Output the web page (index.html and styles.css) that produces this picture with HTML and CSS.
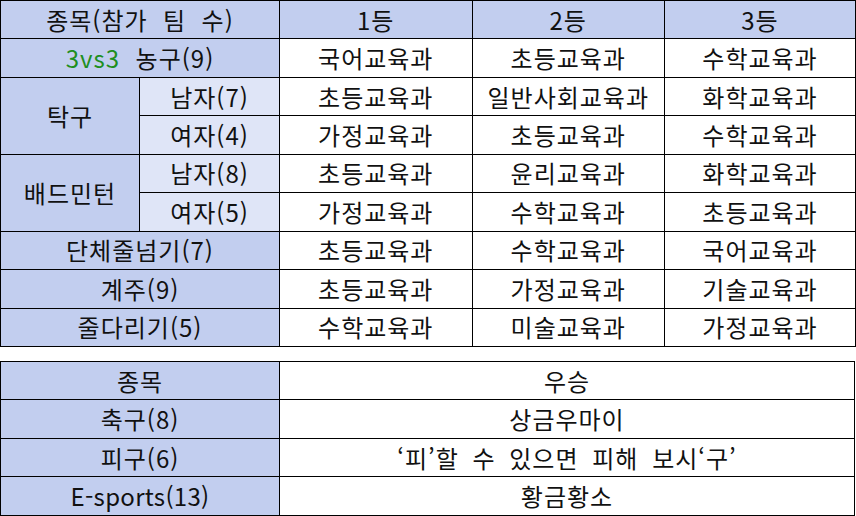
FILE: index.html
```html
<!DOCTYPE html>
<html lang="ko">
<head>
<meta charset="utf-8">
<link rel="stylesheet" href="styles.css">
</head>
<body>
<table class="tbl t1">
  <colgroup>
    <col class="c-a"><col class="c-b"><col class="c-r"><col class="c-r"><col class="c-r3">
  </colgroup>
  <tr><td class="hd" colspan="2">종목(참가&nbsp; 팀&nbsp; 수)</td><td class="hd">1등</td><td class="hd">2등</td><td class="hd">3등</td></tr>
  <tr><td class="hd" colspan="2"><span class="green">3vs3</span>&nbsp; 농구(9)</td><td>국어교육과</td><td>초등교육과</td><td>수학교육과</td></tr>
  <tr><td class="hd" rowspan="2">탁구</td><td class="sub">남자(7)</td><td>초등교육과</td><td>일반사회교육과</td><td>화학교육과</td></tr>
  <tr><td class="sub">여자(4)</td><td>가정교육과</td><td>초등교육과</td><td>수학교육과</td></tr>
  <tr><td class="hd" rowspan="2">배드민턴</td><td class="sub">남자(8)</td><td>초등교육과</td><td>윤리교육과</td><td>화학교육과</td></tr>
  <tr><td class="sub">여자(5)</td><td>가정교육과</td><td>수학교육과</td><td>초등교육과</td></tr>
  <tr><td class="hd" colspan="2">단체줄넘기(7)</td><td>초등교육과</td><td>수학교육과</td><td>국어교육과</td></tr>
  <tr><td class="hd" colspan="2">계주(9)</td><td>초등교육과</td><td>가정교육과</td><td>기술교육과</td></tr>
  <tr><td class="hd" colspan="2">줄다리기(5)</td><td>수학교육과</td><td>미술교육과</td><td>가정교육과</td></tr>
</table>
<table class="tbl t2">
  <colgroup>
    <col class="c-w"><col class="c-rest">
  </colgroup>
  <tr><td class="hd">종목</td><td>우승</td></tr>
  <tr><td class="hd">축구(8)</td><td>상금우마이</td></tr>
  <tr><td class="hd">피구(6)</td><td class="wide">‘피’할 수 있으면 피해 보시‘구’</td></tr>
  <tr><td class="hd"><span class="latin">E-sports(13)</span></td><td>황금황소</td></tr>
</table>
</body>
</html>
```
FILE: styles.css
```css
html, body {
  margin: 0;
  padding: 0;
  background: #ffffff;
}
body {
  font-family: "Noto Sans CJK KR", "Noto Sans", sans-serif;
  font-size: 24px;
  letter-spacing: 1px;
  color: #111111;
}
.tbl {
  border-collapse: collapse;
  table-layout: fixed;
  width: 855px;
}
.tbl td {
  border: 1.3px solid #000000;
  height: 37.45px;
  padding: 0;
  text-align: center;
  vertical-align: middle;
  line-height: 26px;
  white-space: nowrap;
}
.t2 {
  margin-top: 14px;
}
.c-a { width: 139px; }
.c-b { width: 140px; }
.c-r { width: 192.5px; }
.c-r3 { width: 191px; }
.c-w { width: 279px; }
.hd { background: #c2ceef; }
.sub { background: #dfe5f7; }
.green { color: #1e8f1e; }
.latin { letter-spacing: 0.3px; }
.wide { word-spacing: 6px; }
```
